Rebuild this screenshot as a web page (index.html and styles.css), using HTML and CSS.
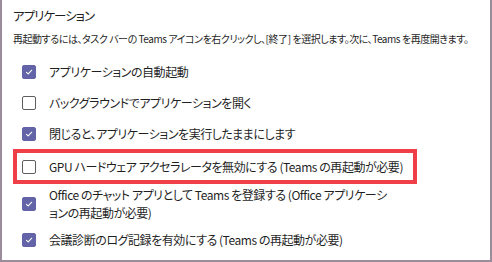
FILE: index.html
```html
<!DOCTYPE html>
<html lang="ja">
<head>
<meta charset="utf-8">
<title>アプリケーション</title>
<link rel="stylesheet" href="styles.css">
</head>
<body>
<div class="panel">
  <h1 class="title">アプリケーション</h1>
  <p class="hint">再起動するには、タスク バーの Teams アイコンを右クリックし、[終了] を選択します。次に、Teams を再度開きます。</p>
  <ul class="options">
    <li class="option">
      <span class="box checked"><svg viewBox="0 0 14 14"><path d="M4 7.3 L6.1 9.3 L10.2 4.9"/></svg></span>
      <span class="label">アプリケーションの自動起動</span>
    </li>
    <li class="option">
      <span class="box"></span>
      <span class="label">バックグラウンドでアプリケーションを開く</span>
    </li>
    <li class="option">
      <span class="box checked"><svg viewBox="0 0 14 14"><path d="M4 7.3 L6.1 9.3 L10.2 4.9"/></svg></span>
      <span class="label">閉じると、アプリケーションを実行したままにします</span>
    </li>
    <li class="option highlight">
      <span class="box"></span>
      <span class="label">GPU ハードウェア アクセラレータを無効にする (Teams の再起動が必要)</span>
    </li>
    <li class="option tall">
      <span class="box checked"><svg viewBox="0 0 14 14"><path d="M4 7.3 L6.1 9.3 L10.2 4.9"/></svg></span>
      <span class="label">Office のチャット アプリとして Teams を登録する (Office アプリケーシ<br>ョンの再起動が必要)</span>
    </li>
    <li class="option">
      <span class="box checked"><svg viewBox="0 0 14 14"><path d="M4 7.3 L6.1 9.3 L10.2 4.9"/></svg></span>
      <span class="label">会議診断のログ記録を有効にする (Teams の再起動が必要)</span>
    </li>
  </ul>
</div>
</body>
</html>
```

FILE: styles.css
```css
* { box-sizing: border-box; }
html, body { margin: 0; padding: 0; background: #fff; }
body {
  width: 492px;
  height: 262px;
  overflow: hidden;
  font-family: "Noto Sans CJK JP", sans-serif;
  font-feature-settings: "palt" 1;
  color: #1f1f1f;
}
.panel {
  width: 492px;
  height: 262px;
  border-left: 2px solid #9a8c9a;
  border-right: 2px solid #9a8c9a;
  border-bottom: 2px solid #9a8c9a;
  padding: 6px 0 0 11px;
}
.title {
  margin: 0;
  font-size: 12.5px;
  font-weight: normal;
  line-height: 20px;
  letter-spacing: -1px;
}
.hint {
  margin: 5px 0 0 0;
  font-size: 10px;
  line-height: 16px;
  letter-spacing: -0.45px;
  white-space: nowrap;
}
.options {
  list-style: none;
  margin: 9px 0 0 0;
  padding: 0;
  display: flex;
  flex-direction: column;
}
.option {
  display: flex;
  align-items: center;
  gap: 13px;
  min-height: 31px;
  padding-left: 9px;
  font-size: 12px;
  line-height: 18px;
  letter-spacing: -0.45px;
}
.option.highlight {
  width: 404px;
  min-height: 35px;
  border: 4px solid #ef3f48;
  padding-left: 5px;
}
.option.tall {
  min-height: 40px;
}
.box {
  flex: 0 0 14px;
  width: 14px;
  height: 14px;
  border: 1px solid #605e5c;
  border-radius: 2px;
  background: #fff;
  display: flex;
}
.box.checked {
  background: #6264a7;
  border-color: #6264a7;
}
.box svg {
  width: 12px;
  height: 12px;
}
.box svg path {
  fill: none;
  stroke: #fff;
  stroke-width: 1.2;
  stroke-linecap: round;
  stroke-linejoin: round;
}
.label {
  white-space: nowrap;
}
```
